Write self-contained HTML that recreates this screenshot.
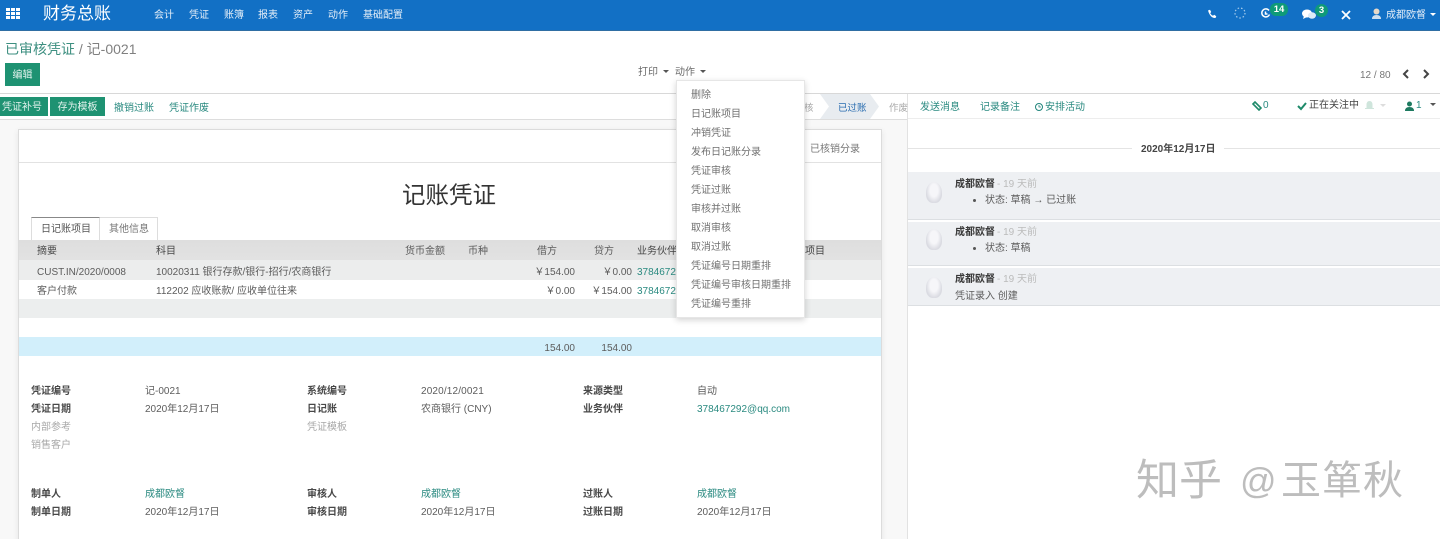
<!DOCTYPE html>
<html lang="zh"><head><meta charset="utf-8"><title>财务总账</title>
<style>
html,body{margin:0;padding:0;background:#fff}
#p{position:relative;width:1440px;height:539px;overflow:hidden;background:#fff;font-family:"Liberation Sans","Noto Sans CJK SC",sans-serif;font-size:10px;color:#5c5c5c}
#p div,#p span.t{position:absolute;white-space:nowrap}
.t{line-height:16px;margin-top:1px}
.w{color:#fff}.g{color:#2a8a80}.b{font-weight:bold;color:#484848}.l{color:#a8a8a8}
.nav{top:7px;color:#e4eef8;font-size:10px}
.car{width:0;height:0;border-left:3px solid transparent;border-right:3px solid transparent;border-top:3px solid currentColor}
.btn{background:#1e9272;color:#e4f3ee;text-align:center;line-height:21px;height:19px;top:97px}
.mi{left:691px;color:#707070;font-size:10px;margin-top:2px}
.msg{left:908px;width:532px;background:#eef0f3;border-bottom:1px solid #dcdfe2}
.av{left:926px;width:16px;height:21px;background:radial-gradient(ellipse at 50% 40%,#f6f6f9 0 35%,#d9dae1 72%,#eef0f3 100%);border-radius:50% 50% 40% 40%}
.nm{left:955px;font-weight:bold;color:#3a3a3a}
.r{text-align:right}
</style></head><body><div id="p">

<div style="left:0;top:0;width:1440px;height:31px;background:#1270c5;border-bottom:1px solid #2f6ea3;box-sizing:border-box"></div>
<svg style="position:absolute;left:6px;top:8px" width="14" height="11"><g fill="#fff"><rect width="4" height="3"/><rect x="5" width="4" height="3"/><rect x="10" width="4" height="3"/><rect y="4" width="4" height="3"/><rect x="5" y="4" width="4" height="3"/><rect x="10" y="4" width="4" height="3"/><rect y="8" width="4" height="3"/><rect x="5" y="8" width="4" height="3"/><rect x="10" y="8" width="4" height="3"/></g></svg>
<div class="w" style="left:43px;top:3px;font-size:17px;line-height:22px">财务总账</div>
<div class="nav t" style="left:154px">会计</div><div class="nav t" style="left:189px">凭证</div><div class="nav t" style="left:224px">账簿</div><div class="nav t" style="left:258px">报表</div><div class="nav t" style="left:293px">资产</div><div class="nav t" style="left:328px">动作</div><div class="nav t" style="left:363px">基础配置</div>

<svg style="position:absolute;left:1207px;top:9px" width="10" height="10" viewBox="0 0 10 10"><path d="M1 1.500 3 .8 4.200 3 3.200 4.200Q4.300 6 6 6.800L7.200 5.800 9.300 7.200 8.500 9Q3.500 9.500 1 1.500Z" fill="#fff"/></svg>
<svg style="position:absolute;left:1234px;top:7px" width="12" height="12"><circle cx="6" cy="6" r="5" fill="none" stroke="#a9cdec" stroke-width="1.200" stroke-dasharray="1.500 2"/></svg>
<svg style="position:absolute;left:1260px;top:8px" width="11" height="11"><path d="M9 2.500A4 4 0 1 0 9.500 6.500M5.500 3.500V6H7.500" fill="none" stroke="#fff" stroke-width="1.500"/></svg>
<div style="left:1270px;top:3px;width:18px;height:13px;border-radius:6px;background:#0f9a78;color:#fff;font-size:9.500px;font-weight:bold;line-height:13px;text-align:center">14</div>
<svg style="position:absolute;left:1302px;top:9px" width="14" height="11"><ellipse cx="5" cy="4.500" rx="5" ry="4" fill="#fff"/><ellipse cx="10" cy="6.500" rx="4" ry="3.200" fill="#dcebf8"/><path d="M2 7 1 10 5 8Z" fill="#fff"/></svg>
<div style="left:1315px;top:4px;width:13px;height:13px;border-radius:7px;background:#0f9a78;color:#fff;font-size:9.500px;font-weight:bold;line-height:13px;text-align:center">3</div>
<svg style="position:absolute;left:1341px;top:10px" width="10" height="10"><path d="M1 1 9 9M9 1 1 9" stroke="#fff" stroke-width="1.800"/></svg>
<svg style="position:absolute;left:1372px;top:8px" width="9" height="12"><circle cx="4.500" cy="3.500" r="3" fill="#e7d9c8"/><path d="M0 11Q0 7 4.500 7T9 11Z" fill="#cfe0f0"/></svg>
<div class="t" style="left:1386px;top:7px;color:#e4eef8;font-size:10px">成都欧督</div>
<div class="car" style="left:1430px;top:13px;color:#fff"></div>

<div style="left:5px;top:40px;font-size:14px;line-height:18px;color:#3d8f80">已审核凭证<span style="color:#808080"> / 记-0021</span></div>
<div style="left:5px;top:63px;width:35px;height:23px;background:#1e9272;color:#e4f3ee;text-align:center;line-height:25px">编辑</div>
<div class="t" style="left:638px;top:64px;color:#6a6a6a">打印</div><div class="car" style="left:663px;top:70px;color:#555"></div>
<div class="t" style="left:675px;top:64px;color:#6a6a6a">动作</div><div class="car" style="left:700px;top:70px;color:#555"></div>
<div class="t" style="left:1360px;top:67px;color:#777">12 / 80</div>
<svg style="position:absolute;left:1402px;top:69px" width="8" height="10"><path d="M6 1 2 5 6 9" fill="none" stroke="#444" stroke-width="2"/></svg>
<svg style="position:absolute;left:1422px;top:69px" width="8" height="10"><path d="M2 1 6 5 2 9" fill="none" stroke="#444" stroke-width="2"/></svg>
<div style="left:0;top:93px;width:1440px;height:1px;background:#d8d8d8"></div>

<div style="left:0;top:119px;width:907px;height:420px;background:#f8f8f8"></div>
<div style="left:0;top:119px;width:907px;height:1px;background:#ddd"></div>
<div style="left:907px;top:94px;width:1px;height:445px;background:#e2e2e2"></div>
<div class="btn" style="left:0;width:48px;text-indent:-4px">凭证补号</div>
<div class="btn" style="left:50px;width:55px">存为模板</div>
<div class="t g" style="left:114px;top:100px">撤销过账</div>
<div class="t g" style="left:169px;top:100px">凭证作废</div>
<svg style="position:absolute;left:800px;top:94px" width="90" height="25"><path d="M20 0H70L79 12.500 70 25H20L29 12.500Z" fill="#e8ecf0"/></svg>
<div class="t l" style="left:804px;top:100px;font-size:9.500px">核</div>
<div class="t" style="left:838px;top:100px;color:#2a6db0;font-size:9.500px">已过账</div>
<div class="t l" style="left:889px;top:100px;font-size:9.500px">作废</div>

<div style="left:18px;top:129px;width:864px;height:420px;background:#fff;border:1px solid #dcdcdc;box-sizing:border-box;box-shadow:0 2px 6px rgba(0,0,0,.08)"></div>
<div style="left:19px;top:162px;width:862px;height:1px;background:#e2e2e2"></div>
<div class="t" style="left:810px;top:141px;color:#777">已核销分录</div>
<div style="left:402px;top:180px;font-size:23.500px;line-height:30px;color:#333">记账凭证</div>

<div style="left:31px;top:217px;width:69px;height:24px;background:#fff;border:1px solid #ddd;border-top:1px solid #888;border-bottom:0;box-sizing:border-box"></div>
<div style="left:100px;top:217px;width:58px;height:24px;background:#fff;border:1px solid #ddd;border-left:0;border-bottom:0;box-sizing:border-box"></div>
<div class="t" style="left:41px;top:221px;color:#555">日记账项目</div>
<div class="t" style="left:109px;top:221px;color:#777">其他信息</div>

<div style="left:19px;top:240px;width:862px;height:20px;background:linear-gradient(#dedede,#e2e2e2)"></div>
<div style="left:19px;top:260px;width:862px;height:20px;background:#eceded"></div>
<div style="left:19px;top:299px;width:862px;height:19px;background:#eceeee"></div>
<div style="left:19px;top:337px;width:862px;height:19px;background:#d2effb"></div>
<div class="t" style="left:37px;top:243px;color:#484848">摘要</div>
<div class="t" style="left:156px;top:243px;color:#484848">科目</div>
<div class="t" style="left:405px;top:243px">货币金额</div>
<div class="t" style="left:468px;top:243px">币种</div>
<div class="t" style="left:537px;top:243px">借方</div>
<div class="t" style="left:594px;top:243px">贷方</div>
<div class="t" style="left:637px;top:243px;color:#444">业务伙伴</div>
<div class="t" style="left:805px;top:243px;color:#444">项目</div>

<div class="t" style="left:37px;top:264px">CUST.IN/2020/0008</div>
<div class="t" style="left:156px;top:264px">10020311 银行存款/银行-招行/农商银行</div>
<div class="t r" style="right:865px;top:264px">￥154.00</div>
<div class="t r" style="right:808px;top:264px">￥0.00</div>
<div class="t g" style="left:637px;top:264px">3784672</div>
<div class="t" style="left:37px;top:283px">客户付款</div>
<div class="t" style="left:156px;top:283px">112202 应收账款/ 应收单位往来</div>
<div class="t r" style="right:865px;top:283px">￥0.00</div>
<div class="t r" style="right:808px;top:283px">￥154.00</div>
<div class="t g" style="left:637px;top:283px">3784672</div>
<div class="t r" style="right:865px;top:340px">154.00</div>
<div class="t r" style="right:808px;top:340px">154.00</div>

<div class="t b" style="left:31px;top:383px">凭证编号</div><div class="t" style="left:145px;top:383px">记-0021</div>
<div class="t b" style="left:307px;top:383px">系统编号</div><div class="t" style="left:421px;top:383px;letter-spacing:.15px">2020/12/0021</div>
<div class="t b" style="left:583px;top:383px">来源类型</div><div class="t" style="left:697px;top:383px">自动</div>
<div class="t b" style="left:31px;top:401px">凭证日期</div><div class="t" style="left:145px;top:401px">2020年12月17日</div>
<div class="t b" style="left:307px;top:401px">日记账</div><div class="t" style="left:421px;top:401px">农商银行 (CNY)</div>
<div class="t b" style="left:583px;top:401px">业务伙伴</div><div class="t g" style="left:697px;top:401px">378467292@qq.com</div>
<div class="t l" style="left:31px;top:419px">内部参考</div><div class="t l" style="left:307px;top:419px">凭证模板</div>
<div class="t l" style="left:31px;top:437px">销售客户</div>
<div class="t b" style="left:31px;top:486px">制单人</div><div class="t g" style="left:145px;top:486px">成都欧督</div>
<div class="t b" style="left:307px;top:486px">审核人</div><div class="t g" style="left:421px;top:486px">成都欧督</div>
<div class="t b" style="left:583px;top:486px">过账人</div><div class="t g" style="left:697px;top:486px">成都欧督</div>
<div class="t b" style="left:31px;top:504px">制单日期</div><div class="t" style="left:145px;top:504px">2020年12月17日</div>
<div class="t b" style="left:307px;top:504px">审核日期</div><div class="t" style="left:421px;top:504px">2020年12月17日</div>
<div class="t b" style="left:583px;top:504px">过账日期</div><div class="t" style="left:697px;top:504px">2020年12月17日</div>

<div style="left:676px;top:80px;width:129px;height:238px;background:#fff;border:1px solid #e6e6e6;box-sizing:border-box;box-shadow:0 2px 6px rgba(0,0,0,.18)"></div>
<div class="t mi" style="top:86px">删除</div>
<div class="t mi" style="top:105px">日记账项目</div>
<div class="t mi" style="top:124px">冲销凭证</div>
<div class="t mi" style="top:143px">发布日记账分录</div>
<div class="t mi" style="top:162px">凭证审核</div>
<div class="t mi" style="top:181px">凭证过账</div>
<div class="t mi" style="top:200px">审核并过账</div>
<div class="t mi" style="top:219px">取消审核</div>
<div class="t mi" style="top:238px">取消过账</div>
<div class="t mi" style="top:257px">凭证编号日期重排</div>
<div class="t mi" style="top:276px">凭证编号审核日期重排</div>
<div class="t mi" style="top:295px">凭证编号重排</div>

<div class="t g" style="left:920px;top:99px">发送消息</div>
<div class="t g" style="left:980px;top:99px">记录备注</div>
<svg style="position:absolute;left:1034px;top:102px" width="10" height="10"><circle cx="5" cy="5" r="3.500" fill="none" stroke="#21857c"/><path d="M5 3V5H7" fill="none" stroke="#21857c" stroke-width=".8"/></svg>
<div class="t g" style="left:1045px;top:99px">安排活动</div>
<svg style="position:absolute;left:1252px;top:101px" width="10" height="10"><path d="M1 3 3 1 9 7 7 9Z" fill="none" stroke="#1e8a6a" stroke-width="1.600"/></svg>
<div class="t g" style="left:1263px;top:97px">0</div>
<svg style="position:absolute;left:1297px;top:102px" width="10" height="9"><path d="M1 4 4 7 9 1" fill="none" stroke="#1e8a6a" stroke-width="2"/></svg>
<div class="t" style="left:1309px;top:97px;color:#444">正在关注中</div>
<svg style="position:absolute;left:1365px;top:100px" width="9" height="11"><path d="M4.500 1Q7.500 1 7.500 5V8H9V9H0V8H1.500V5Q1.500 1 4.500 1Z" fill="#cfe5dc"/></svg>
<div class="car" style="left:1380px;top:104px;color:#ddd"></div>
<svg style="position:absolute;left:1405px;top:101px" width="9" height="10"><circle cx="4.500" cy="3" r="2.500" fill="#1e7a60"/><path d="M0 10Q0 6 4.500 6T9 10Z" fill="#1e7a60"/></svg>
<div class="t g" style="left:1416px;top:97px">1</div>
<div class="car" style="left:1430px;top:103px;color:#555"></div>
<div style="left:908px;top:118px;width:532px;height:1px;background:#ededed"></div>

<div style="left:908px;top:148px;width:224px;height:1px;background:#e4e4e4"></div>
<div style="left:1224px;top:148px;width:216px;height:1px;background:#e4e4e4"></div>
<div class="t" style="left:1141px;top:141px;color:#444;font-weight:bold;font-size:10px">2020年12月17日</div>

<div class="msg" style="top:172px;height:47px"></div>
<div class="msg" style="top:222px;height:43px"></div>
<div class="msg" style="top:268px;height:37px"></div>
<div class="av" style="top:182px"></div><div class="av" style="top:229px"></div><div class="av" style="top:277px"></div>
<div class="t nm" style="top:176px">成都欧督</div><div class="t l" style="left:997px;top:176px;color:#bbb">- 19 天前</div>
<div style="left:973px;top:199px;width:3px;height:3px;border-radius:50%;background:#555"></div>
<div class="t" style="left:985px;top:192px">状态: 草稿 → 已过账</div>
<div class="t nm" style="top:224px">成都欧督</div><div class="t l" style="left:997px;top:224px;color:#bbb">- 19 天前</div>
<div style="left:973px;top:247px;width:3px;height:3px;border-radius:50%;background:#555"></div>
<div class="t" style="left:985px;top:240px">状态: 草稿</div>
<div class="t nm" style="top:271px">成都欧督</div><div class="t l" style="left:997px;top:271px;color:#bbb">- 19 天前</div>
<div class="t" style="left:955px;top:288px">凭证录入 创建</div>

<div style="left:1136px;top:458px;font-size:43px;line-height:46px;color:#bdbdbd">知乎</div>
<div style="left:1240px;top:458px;font-size:36px;line-height:46px;color:#bdbdbd">@</div>
<div style="left:1281px;top:458px;font-size:40px;line-height:46px;color:#bdbdbd;letter-spacing:1px">玉箪秋</div>
</div></body></html>
